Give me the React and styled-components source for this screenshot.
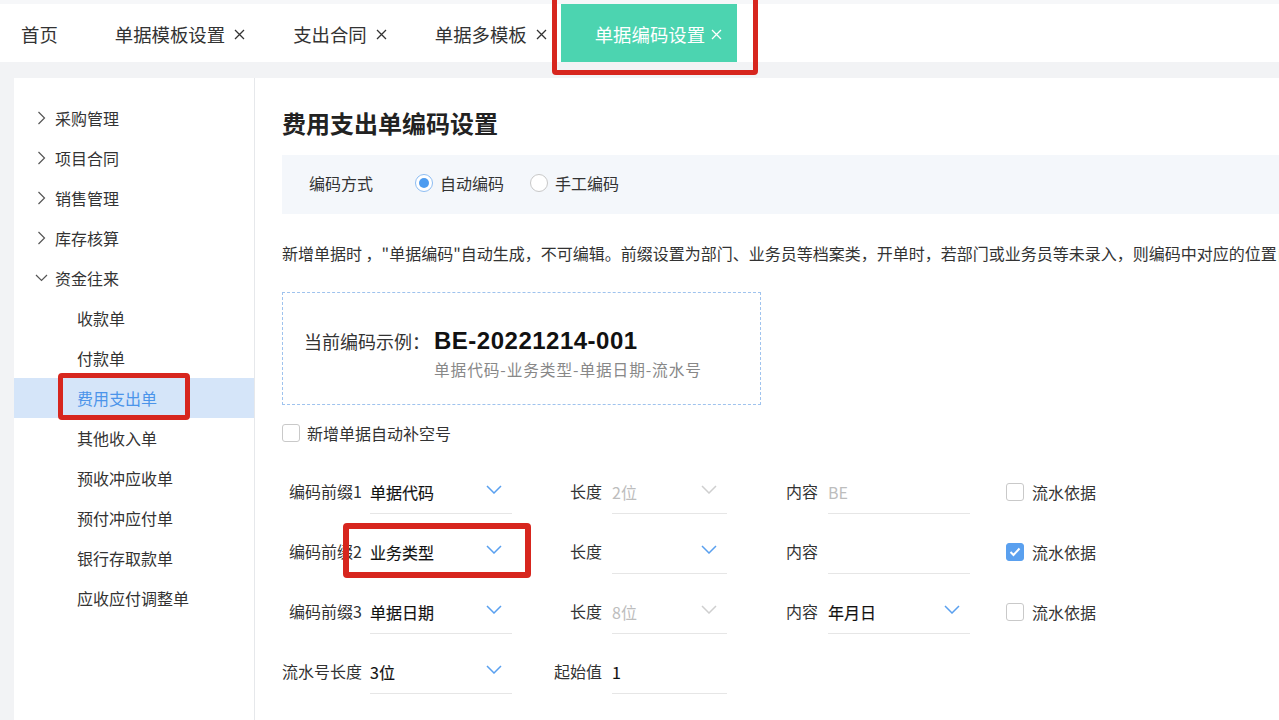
import React from 'react';
import styled, { createGlobalStyle } from 'styled-components';

const GlobalStyle = createGlobalStyle`
  html, body {
    margin: 0;
    padding: 0;
  }
  body {
    font-family: "Noto Sans CJK SC", "Noto Sans", "Liberation Sans", sans-serif;
    color: #333;
    background: #fff;
  }
  * {
    box-sizing: border-box;
  }
`;

const Page = styled.div`
  width: 1279px;
  height: 720px;
  display: flex;
  flex-direction: column;
  background: #f2f3f5;
  overflow: hidden;
`;

const TopStrip = styled.div`
  height: 4px;
  flex-shrink: 0;
  background: #f6f7f9;
`;

const TabBar = styled.div`
  height: 58px;
  flex-shrink: 0;
  display: flex;
  align-items: stretch;
  background: #fff;
  position: relative;
  z-index: 2;
`;

const Tab = styled.div`
  position: relative;
  display: flex;
  align-items: center;
  gap: ${(p) => (p.$active ? '6px' : '9px')};
  padding: 2px ${(p) => (p.$home ? '23px' : p.$active ? '15px' : '14px')} 0
    ${(p) => (p.$home ? '21px' : '34px')};
  font-size: 18.4px;
  white-space: nowrap;
  color: ${(p) => (p.$active ? '#fff' : '#333')};
  background: ${(p) => (p.$active ? '#4cd4b0' : 'transparent')};
`;

const Mark = styled.span`
  position: absolute;
  left: ${(p) => p.$left}px;
  top: ${(p) => p.$top}px;
  width: ${(p) => p.$width}px;
  height: ${(p) => p.$height}px;
  border: ${(p) => p.$border || 6}px solid #d7261e;
  border-radius: 4px;
  pointer-events: none;
  z-index: 5;
`;

const Body = styled.div`
  flex: 1;
  min-height: 0;
  display: flex;
  padding: 16px 0 0 14px;
`;

const Sidebar = styled.nav`
  width: 241px;
  flex-shrink: 0;
  background: #fff;
  border-right: 1px solid #e6e8eb;
  padding-top: 20px;
`;

const MenuItem = styled.div`
  position: relative;
  height: 40px;
  display: flex;
  align-items: center;
  padding-left: ${(p) => (p.$sub ? 63 : 23)}px;
  font-size: 16px;
  color: ${(p) => (p.$selected ? '#4b94ea' : '#333')};
  background: ${(p) => (p.$selected ? '#d5e5f9' : 'transparent')};
`;

const Arrow = styled.span`
  width: 18px;
  display: flex;
  align-items: center;
  color: #555;
  margin-left: ${(p) => (p.$open ? '-2px' : '0')};
  margin-right: ${(p) => (p.$open ? '2px' : '0')};
`;

const Content = styled.main`
  flex: 1;
  min-width: 0;
  background: #fff;
  padding: 29px 0 0 27px;
  overflow: hidden;
`;

const Title = styled.h1`
  margin: 0;
  font-size: 24px;
  font-weight: 700;
  line-height: 32px;
  color: #222;
`;

const ModeBox = styled.div`
  margin-top: 16px;
  height: 59px;
  display: flex;
  align-items: center;
  padding: 0 0 3px 27px;
  background: #f4f7fb;
  font-size: 16px;
`;

const ModeLabel = styled.span`
  margin-right: 42px;
  color: #333;
`;

const RadioOption = styled.label`
  display: flex;
  align-items: center;
  gap: 7px;
  margin-right: 26px;
  color: #333;
`;

const RadioCircle = styled.span`
  position: relative;
  width: 18px;
  height: 18px;
  border-radius: 50%;
  border: 1px solid ${(p) => (p.$checked ? '#8dbdf3' : '#c8c8c8')};
  background: #fff;

  &::after {
    content: '';
    display: ${(p) => (p.$checked ? 'block' : 'none')};
    position: absolute;
    left: 3px;
    top: 3px;
    width: 10px;
    height: 10px;
    border-radius: 50%;
    background: #4d9cf0;
  }
`;

const Description = styled.p`
  margin: 27px 0 0;
  font-size: 16px;
  line-height: 24px;
  white-space: nowrap;
  color: #333;
`;

const ExampleBox = styled.div`
  margin-top: 27px;
  width: 479px;
  height: 113px;
  border: 1px dashed #9fc3ee;
  padding: 32px 0 0 21px;
  display: flex;
  align-items: flex-start;
`;

const ExampleLabel = styled.span`
  width: 130px;
  font-size: 18px;
  line-height: 32px;
  color: #333;
`;

const ExampleCode = styled.div`
  font-family: "Liberation Sans", Arial, sans-serif;
  font-weight: 700;
  font-size: 24px;
  line-height: 32px;
  letter-spacing: 0.5px;
  color: #111;
`;

const ExampleHint = styled.div`
  margin-top: 2px;
  font-size: 15.7px;
  line-height: 22px;
  letter-spacing: 0.9px;
  color: #888;
`;

const CheckRow = styled.label`
  margin-top: 18px;
  height: 20px;
  display: flex;
  align-items: center;
  gap: 7px;
  font-size: 16px;
  color: #333;
`;

const Checkbox = styled.span`
  width: 18px;
  height: 18px;
  flex-shrink: 0;
  display: flex;
  align-items: center;
  justify-content: center;
  border-radius: 3px;
  border: 1px solid ${(p) => (p.$checked ? '#5aa0ef' : '#c9c9c9')};
  background: ${(p) => (p.$checked ? '#5aa0ef' : '#fff')};
`;

const Form = styled.div`
  margin-top: 27px;
  display: flex;
  flex-direction: column;
  gap: 16px;
`;

const FormRow = styled.div`
  display: grid;
  grid-template-columns: 258px 220px 246px auto;
  height: 44px;
`;

const Field = styled.div`
  display: flex;
  align-items: stretch;
`;

const FieldLabel = styled.span`
  width: ${(p) => p.$width}px;
  margin-right: ${(p) => p.$gap}px;
  flex-shrink: 0;
  text-align: right;
  white-space: nowrap;
  font-size: 16px;
  line-height: 43px;
  color: #333;
`;

const Select = styled.div`
  position: relative;
  width: ${(p) => p.$width}px;
  display: flex;
  align-items: center;
  padding-right: 10px;
  border-bottom: 1px solid #e6e6e6;
  font-size: 16px;
  color: ${(p) => (p.$muted ? '#bdbdbd' : '#111')};
  -webkit-text-stroke: ${(p) => (p.$muted ? '0' : '0.15px currentColor')};
`;

const Caret = styled.span`
  display: flex;
  margin: -5px 0 0 auto;
  color: ${(p) => (p.$tone === 'blue' ? '#5aa0ef' : '#cfcfcf')};
`;

const FlowCheck = styled.label`
  display: flex;
  align-items: center;
  gap: 8px;
  height: 43px;
  font-size: 16px;
  color: #333;
`;

const CloseIcon = () => (
  <svg width="11" height="11" viewBox="0 0 11 11" fill="none" stroke="currentColor" strokeWidth="1.3">
    <path d="M1 1 L10 10 M10 1 L1 10" />
  </svg>
);

const ChevronRight = () => (
  <svg width="9" height="14" viewBox="0 0 9 14" fill="none" stroke="currentColor" strokeWidth="1.2">
    <polyline points="1.5,1 7.5,7 1.5,13" />
  </svg>
);

const ChevronDown = () => (
  <svg width="13" height="8" viewBox="0 0 13 8" fill="none" stroke="currentColor" strokeWidth="1.2">
    <polyline points="1,1 6.5,6.5 12,1" />
  </svg>
);

const SelectCaret = ({ tone }) => (
  <Caret $tone={tone}>
    <svg width="16" height="9" viewBox="0 0 16 9" fill="none" stroke="currentColor" strokeWidth="1.5">
      <polyline points="1,1 8,8 15,1" />
    </svg>
  </Caret>
);

const CheckMark = () => (
  <svg width="12" height="10" viewBox="0 0 12 10" fill="none" stroke="#fff" strokeWidth="2">
    <polyline points="1.5,5 4.5,8 10.5,1.5" />
  </svg>
);

const tabs = [
  { name: '首页', home: true },
  { name: '单据模板设置', closable: true },
  { name: '支出合同', closable: true },
  { name: '单据多模板', closable: true },
  { name: '单据编码设置', closable: true, active: true },
];

const menu = [
  { name: '采购管理', arrow: 'right' },
  { name: '项目合同', arrow: 'right' },
  { name: '销售管理', arrow: 'right' },
  { name: '库存核算', arrow: 'right' },
  { name: '资金往来', arrow: 'down' },
  { name: '收款单', sub: true },
  { name: '付款单', sub: true },
  { name: '费用支出单', sub: true, selected: true },
  { name: '其他收入单', sub: true },
  { name: '预收冲应收单', sub: true },
  { name: '预付冲应付单', sub: true },
  { name: '银行存取款单', sub: true },
  { name: '应收应付调整单', sub: true },
];

const prefixes = [
  {
    label: '编码前缀1',
    value: '单据代码',
    length: '2位',
    lengthCaret: 'gray',
    content: 'BE',
    contentMuted: true,
    checked: false,
  },
  {
    label: '编码前缀2',
    value: '业务类型',
    length: '',
    lengthCaret: 'blue',
    content: '',
    checked: true,
    marked: true,
  },
  {
    label: '编码前缀3',
    value: '单据日期',
    length: '8位',
    lengthCaret: 'gray',
    content: '年月日',
    contentCaret: 'blue',
    checked: false,
  },
];

function App() {
  return (
    <>
      <GlobalStyle />
      <Page>
        <TopStrip />
        <TabBar>
          {tabs.map((t) => (
            <Tab key={t.name} $home={t.home} $active={t.active}>
              {t.name}
              {t.closable && <CloseIcon />}
              {t.active && <Mark $left={-9} $top={-12} $width={206} $height={83} $border={5} />}
            </Tab>
          ))}
        </TabBar>

        <Body>
          <Sidebar>
            {menu.map((m) => (
              <MenuItem key={m.name} $sub={m.sub} $selected={m.selected}>
                {m.arrow && (
                  <Arrow $open={m.arrow === 'down'}>
                    {m.arrow === 'down' ? <ChevronDown /> : <ChevronRight />}
                  </Arrow>
                )}
                {m.name}
                {m.selected && <Mark $left={44} $top={-5} $width={132} $height={47} $border={5} />}
              </MenuItem>
            ))}
          </Sidebar>

          <Content>
            <Title>费用支出单编码设置</Title>

            <ModeBox>
              <ModeLabel>编码方式</ModeLabel>
              <RadioOption>
                <RadioCircle $checked />
                自动编码
              </RadioOption>
              <RadioOption>
                <RadioCircle />
                手工编码
              </RadioOption>
            </ModeBox>

            <Description>
              新增单据时 ，"单据编码"自动生成，不可编辑。前缀设置为部门、业务员等档案类，开单时，若部门或业务员等未录入，则编码中对应的位置自动为空。
            </Description>

            <ExampleBox>
              <ExampleLabel>当前编码示例：</ExampleLabel>
              <div>
                <ExampleCode>BE-20221214-001</ExampleCode>
                <ExampleHint>单据代码-业务类型-单据日期-流水号</ExampleHint>
              </div>
            </ExampleBox>

            <CheckRow>
              <Checkbox />
              新增单据自动补空号
            </CheckRow>

            <Form>
              {prefixes.map((r) => (
                <FormRow key={r.label}>
                  <Field>
                    <FieldLabel $width={80} $gap={8}>{r.label}</FieldLabel>
                    <Select $width={142}>
                      {r.value}
                      <SelectCaret tone="blue" />
                      {r.marked && <Mark $left={-27} $top={-7} $width={188} $height={55} />}
                    </Select>
                  </Field>
                  <Field>
                    <FieldLabel $width={62} $gap={10}>长度</FieldLabel>
                    <Select $width={115} $muted>
                      {r.length}
                      <SelectCaret tone={r.lengthCaret} />
                    </Select>
                  </Field>
                  <Field>
                    <FieldLabel $width={58} $gap={10}>内容</FieldLabel>
                    <Select $width={142} $muted={r.contentMuted}>
                      {r.content}
                      {r.contentCaret && <SelectCaret tone={r.contentCaret} />}
                    </Select>
                  </Field>
                  <FlowCheck>
                    <Checkbox $checked={r.checked}>{r.checked && <CheckMark />}</Checkbox>
                    流水依据
                  </FlowCheck>
                </FormRow>
              ))}
              <FormRow>
                <Field>
                  <FieldLabel $width={80} $gap={8}>流水号长度</FieldLabel>
                  <Select $width={142}>
                    3位
                    <SelectCaret tone="blue" />
                  </Select>
                </Field>
                <Field>
                  <FieldLabel $width={62} $gap={10}>起始值</FieldLabel>
                  <Select $width={115}>1</Select>
                </Field>
              </FormRow>
            </Form>
          </Content>
        </Body>
      </Page>
    </>
  );
}

export default App;
